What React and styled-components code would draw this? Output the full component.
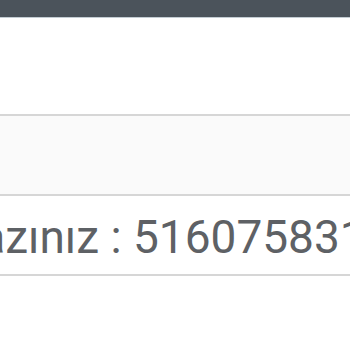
import React from "react";
import styled, { createGlobalStyle } from "styled-components";

const GlobalStyle = createGlobalStyle`
  html, body {
    margin: 0;
    padding: 0;
    background: #ffffff;
    font-family: Roboto, "Noto Sans", sans-serif;
    overflow: hidden;
  }
`;

const Page = styled.div`
  width: 350px;
  height: 350px;
  overflow: hidden;
  display: flex;
  flex-direction: column;
`;

const TopBar = styled.div`
  height: 17px;
  background: #4b535b;
  border-bottom: 1px solid #c3ccd3;
  flex-shrink: 0;
`;

const Spacer = styled.div`
  height: 96px;
  flex-shrink: 0;
`;

const Table = styled.div`
  border-top: 2px solid #d6d6d6;
  display: flex;
  flex-direction: column;
`;

const Row = styled.div`
  height: 80px;
  background: ${(p) => (p.$shaded ? "#fafafa" : "#ffffff")};
  border-bottom: 2px solid #d6d6d6;
  display: flex;
  align-items: center;
  padding-top: 3px;
  box-sizing: border-box;
  overflow: hidden;
  white-space: nowrap;
  font-size: 46px;
  color: #5e6165;
`;

const Label = styled.div`
  width: 133px;
  flex-shrink: 0;
  display: flex;
  justify-content: flex-end;
`;

const Value = styled.span`
  flex-shrink: 0;
`;

export default function App() {
  return (
    <Page>
      <GlobalStyle />
      <TopBar />
      <Spacer />
      <Table>
        <Row $shaded />
        <Row>
          <Label>Referans kodunu yazınız :&nbsp;</Label>
          <Value>5160758312</Value>
        </Row>
      </Table>
    </Page>
  );
}
